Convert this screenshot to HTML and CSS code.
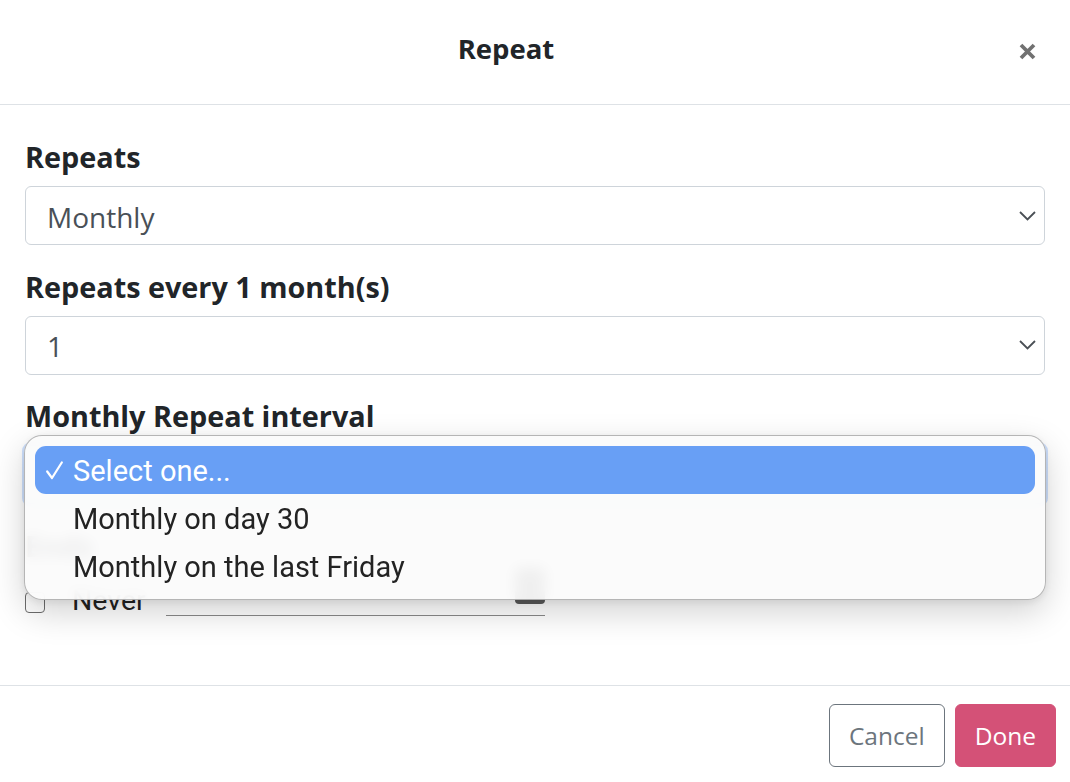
FILE: index.html
```html
<!DOCTYPE html>
<html lang="en">
<head>
<meta charset="utf-8">
<title>Repeat</title>
<link rel="stylesheet" href="styles.css">
</head>
<body>
<div class="modal">
  <header class="modal-header">
    <h1 class="modal-title">Repeat</h1>
    <button class="close" aria-label="Close">
      <svg width="17" height="17" viewBox="0 0 17 17"><path d="M2 2 L15 15 M15 2 L2 15" stroke="#717171" stroke-width="3.8" fill="none"/></svg>
    </button>
  </header>

  <main class="modal-body">
    <div class="group">
      <label class="label">Repeats</label>
      <div class="select">
        <span class="value">Monthly</span>
        <svg class="chev" width="17" height="10" viewBox="0 0 17 10"><path d="M1 1 L8.5 8.5 L16 1" stroke="#4a4f55" stroke-width="1.8" fill="none"/></svg>
      </div>
    </div>
    <div class="group">
      <label class="label">Repeats every 1 month(s)</label>
      <div class="select">
        <span class="value">1</span>
        <svg class="chev" width="17" height="10" viewBox="0 0 17 10"><path d="M1 1 L8.5 8.5 L16 1" stroke="#4a4f55" stroke-width="1.8" fill="none"/></svg>
      </div>
    </div>
    <div class="group">
      <label class="label">Monthly Repeat interval</label>
      <div class="select focused">
        <span class="value">Select one...</span>
        <svg class="chev" width="17" height="10" viewBox="0 0 17 10"><path d="M1 1 L8.5 8.5 L16 1" stroke="#4a4f55" stroke-width="1.8" fill="none"/></svg>
      </div>
    </div>
    <div class="group ends">
      <label class="label">Ends</label>
      <div class="never-row">
        <span class="checkbox"></span>
        <span class="never">Never</span>
        <span class="date-input"><span class="date-icon"></span></span>
      </div>
    </div>
  </main>

  <footer class="modal-footer">
    <button class="btn btn-cancel">Cancel</button>
    <button class="btn btn-done">Done</button>
  </footer>

  <div class="popup" role="listbox">
    <div class="option selected">
      <svg class="check" width="17" height="19" viewBox="0 0 17 19"><path d="M1.2 10.5 L6 17 L15.8 1.5" stroke="#ffffff" stroke-width="2.2" fill="none" stroke-linecap="round" stroke-linejoin="round"/></svg>
      <span>Select one...</span>
    </div>
    <div class="option"><span>Monthly on day 30</span></div>
    <div class="option"><span>Monthly on the last Friday</span></div>
  </div>
</div>
</body>
</html>
```

FILE: styles.css
```css
html, body {
  margin: 0;
  padding: 0;
  background: #ffffff;
}

body {
  font-family: "Open Sans", "Noto Sans", sans-serif;
  color: #212529;
}

.modal {
  position: relative;
  width: 1070px;
  height: 782px;
  display: flex;
  flex-direction: column;
  overflow: hidden;
}

.modal-header {
  height: 104px;
  border-bottom: 1px solid #dee2e6;
  display: flex;
  align-items: center;
  padding-right: 34px;
  flex-shrink: 0;
}

.modal-title {
  flex: 1;
  margin: 0 7px 0 0;
  text-align: center;
  font-size: 27.5px;
  font-weight: 700;
  line-height: 1.5;
  color: #212529;
  padding-bottom: 6px;
}

.close {
  width: 17px;
  height: 17px;
  padding: 0;
  margin: 0 0 2px 0;
  border: 0;
  background: transparent;
  display: flex;
}

.modal-body {
  flex: 1;
  padding: 31px 25px 0 25px;
}

.group {
  margin-bottom: 20.5px;
}

.label {
  display: block;
  font-size: 28.8px;
  font-weight: 700;
  line-height: 42px;
  margin-bottom: 8px;
  color: #212529;
}

.select {
  height: 59px;
  box-sizing: border-box;
  border: 1px solid #ced4da;
  border-radius: 6px;
  padding: 0 8px 0 21px;
  display: flex;
  align-items: center;
  justify-content: space-between;
  font-size: 28px;
  line-height: 42px;
  color: #495057;
}

.select .value {
  padding-top: 2px;
}

.select.focused {
  border-color: #86b7fe;
  box-shadow: 0 0 0 3px rgba(13, 110, 253, 0.2);
}

.ends .label {
  margin-bottom: 13px;
}

.never-row {
  display: flex;
  align-items: flex-start;
  height: 42px;
  font-family: "Roboto", "Inter", sans-serif;
}

.checkbox {
  width: 18px;
  height: 19px;
  border: 1.5px solid #6d6d6d;
  border-radius: 4px;
  margin-top: 12px;
  flex-shrink: 0;
  background: #fff;
}

.never {
  margin-left: 27px;
  font-size: 28.5px;
  line-height: 42px;
  color: #222222;
}

.date-input {
  margin-left: 20px;
  width: 379px;
  height: 35px;
  border-bottom: 1px solid #8a8a8a;
  display: flex;
  justify-content: flex-end;
  align-items: flex-end;
}

.date-icon {
  width: 30px;
  height: 36px;
  background: #5a5a5a;
  border-radius: 4px;
  margin-bottom: 11px;
}

.modal-footer {
  flex-shrink: 0;
  border-top: 1px solid #dee2e6;
  padding: 18px 14px 15px 0;
  display: flex;
  justify-content: flex-end;
  gap: 10px;
}

.btn {
  font-family: "Open Sans", "Noto Sans", sans-serif;
  font-size: 24.5px;
  line-height: 38px;
  padding: 11.5px 19px;
  border-radius: 6px;
  border: 1px solid transparent;
  background: transparent;
  cursor: pointer;
}

.btn-cancel {
  border-color: #6c757d;
  color: #6c757d;
}

.btn-done {
  background: #d45177;
  border-color: #d45177;
  color: #ffffff;
}

.popup {
  position: absolute;
  left: 24px;
  top: 435px;
  width: 1022px;
  height: 165px;
  box-sizing: border-box;
  padding: 10px 10px;
  border: 1px solid rgba(0, 0, 0, 0.28);
  border-radius: 18px;
  background: rgba(251, 251, 251, 0.93);
  backdrop-filter: blur(7px);
  box-shadow: 0 12px 34px rgba(0, 0, 0, 0.18), 0 2px 8px rgba(0, 0, 0, 0.08);
  font-family: "Roboto", "Inter", sans-serif;
  font-size: 29px;
  color: #232323;
}

.option {
  height: 48px;
  box-sizing: border-box;
  padding: 2px 0 0 38px;
  line-height: 46px;
  position: relative;
  white-space: nowrap;
}

.option.selected {
  background: #689ff5;
  border-radius: 11px;
  color: #ffffff;
}

.check {
  position: absolute;
  left: 11px;
  top: 15px;
}
```
